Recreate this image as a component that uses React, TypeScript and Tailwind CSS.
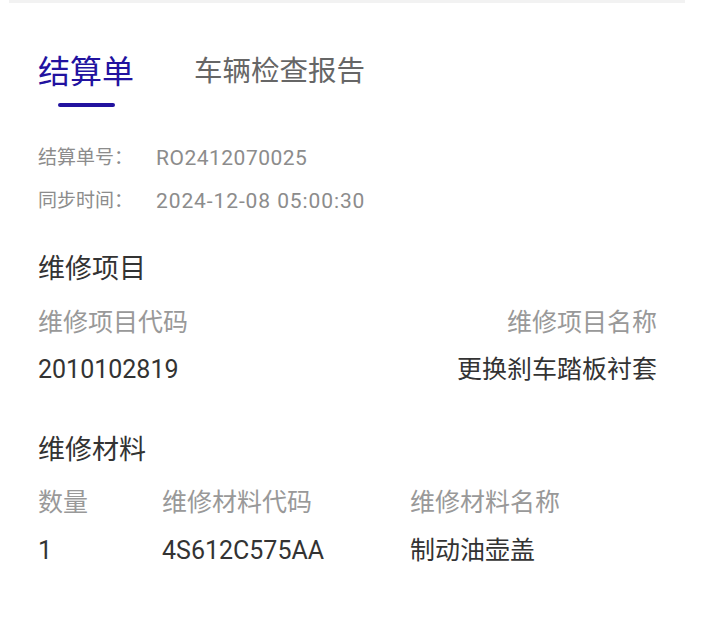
const font = { fontFamily: '"Roboto", "Noto Sans CJK SC", sans-serif' };

const projects = [{ code: "2010102819", name: "更换刹车踏板衬套" }];
const materials = [{ qty: "1", code: "4S612C575AA", name: "制动油壶盖" }];

export default function App() {
  return (
    <div className="w-[703px] h-[626px] bg-white overflow-hidden" style={font}>
      <div className="ml-[9px] mr-[18px] h-[3px] bg-[#f2f2f2]" />

      {/* tabs */}
      <div className="flex items-end px-[38px] mt-[49px]">
        <div className="flex flex-col items-center">
          <span className="text-[32px] leading-[40px] text-[#22129f]">结算单</span>
          <span className="mt-[11px] w-[57px] h-[4px] rounded-full bg-[#22129f]" />
        </div>
        <span className="ml-[60px] mb-[15px] text-[28.5px] leading-[40px] text-[#666666]">车辆检查报告</span>
      </div>

      {/* info */}
      <div className="px-[38px] mt-[30px] text-[19px] text-[#8c8c8c]">
        <div className="flex h-[43px] items-center">
          <span className="w-[118px]">结算单号：</span>
          <span className="text-[21px] tracking-[0.5px]">RO2412070025</span>
        </div>
        <div className="flex h-[43px] items-center">
          <span className="w-[118px]">同步时间：</span>
          <span className="text-[21px] tracking-[0.9px]">2024-12-08 05:00:30</span>
        </div>
      </div>

      {/* 维修项目 */}
      <div className="pl-[38px] pr-[46px] mt-[24px]">
        <div className="text-[27px] leading-[44px] text-[#333333]">维修项目</div>
        <div className="flex justify-between mt-[10px] text-[25px] leading-[44px] text-[#999999]">
          <span>维修项目代码</span>
          <span>维修项目名称</span>
        </div>
        {projects.map((p) => (
          <div key={p.code} className="flex justify-between mt-[3px] text-[25px] leading-[44px] text-[#333333]">
            <span>{p.code}</span>
            <span>{p.name}</span>
          </div>
        ))}
      </div>

      {/* 维修材料 */}
      <div className="pl-[38px] pr-[46px] mt-[36px]">
        <div className="text-[27px] leading-[44px] text-[#333333]">维修材料</div>
        <div className="flex mt-[9px] text-[25px] leading-[44px] text-[#999999]">
          <span className="w-[124px]">数量</span>
          <span className="w-[248px]">维修材料代码</span>
          <span>维修材料名称</span>
        </div>
        {materials.map((m) => (
          <div key={m.code} className="flex mt-[4px] text-[25px] leading-[44px] text-[#333333]">
            <span className="w-[124px]">{m.qty}</span>
            <span className="w-[248px]">{m.code}</span>
            <span>{m.name}</span>
          </div>
        ))}
      </div>
    </div>
  );
}
